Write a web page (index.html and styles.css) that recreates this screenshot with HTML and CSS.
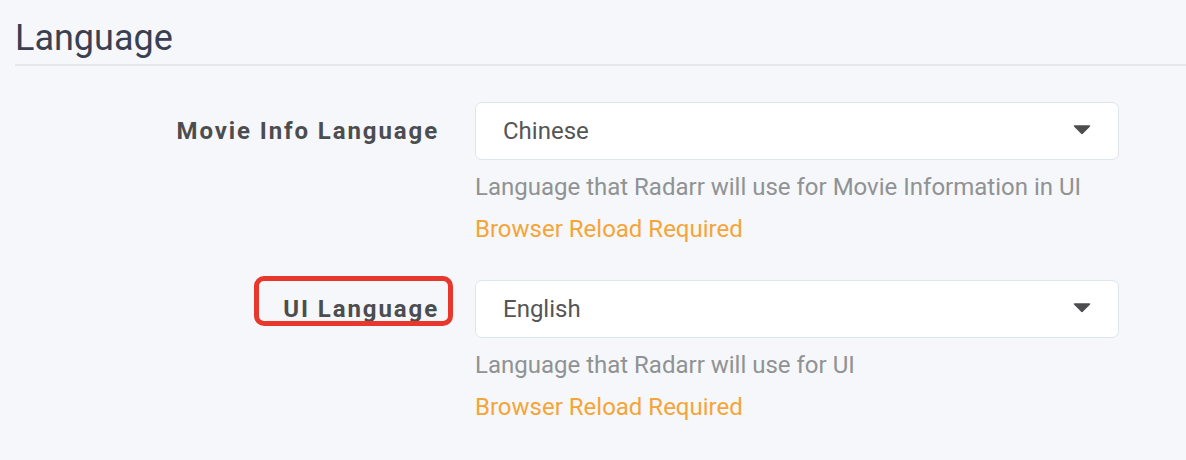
FILE: index.html
```html
<!DOCTYPE html>
<html lang="en">
<head>
<meta charset="utf-8">
<title>Language</title>
<link rel="stylesheet" href="styles.css">
</head>
<body>
<fieldset class="section">
  <div class="legend">Language</div>

  <div class="form-row">
    <label class="form-label">Movie Info Language</label>
    <div class="field">
      <div class="select">
        <span class="select-value">Chinese</span>
        <svg class="caret" width="18" height="11" viewBox="0 0 18 11"><path d="M2 1.2 H16 Q18.2 1.2 16.8 2.8 L10.1 9.6 Q9 10.7 7.9 9.6 L1.2 2.8 Q-0.2 1.2 2 1.2 Z" fill="#4d4d4f"/></svg>
      </div>
      <div class="help">Language that Radarr will use for Movie Information in UI</div>
      <div class="help warning">Browser Reload Required</div>
    </div>
  </div>

  <div class="form-row">
    <label class="form-label">UI Language<span class="highlight"></span></label>
    <div class="field">
      <div class="select">
        <span class="select-value">English</span>
        <svg class="caret" width="18" height="11" viewBox="0 0 18 11"><path d="M2 1.2 H16 Q18.2 1.2 16.8 2.8 L10.1 9.6 Q9 10.7 7.9 9.6 L1.2 2.8 Q-0.2 1.2 2 1.2 Z" fill="#4d4d4f"/></svg>
      </div>
      <div class="help">Language that Radarr will use for UI</div>
      <div class="help warning">Browser Reload Required</div>
    </div>
  </div>
</fieldset>
</body>
</html>
```

FILE: styles.css
```css
html, body {
  margin: 0;
  padding: 0;
  background: #f5f7fa;
  font-family: Roboto, "Liberation Sans", Arial, sans-serif;
}

.section {
  margin: 0;
  padding: 15px 0 0 15px;
  border: 0;
  min-width: 0;
}

.legend {
  font-size: 36px;
  line-height: 47px;
  color: #3a3f51;
  padding-bottom: 2px;
  border-bottom: 2px solid #e6e7ea;
  margin-bottom: 36px;
}

.form-row {
  display: flex;
  align-items: flex-start;
  margin-bottom: 30px;
}

.form-label {
  position: relative;
  width: 424px;
  flex: none;
  text-align: right;
  font-weight: bold;
  font-size: 24px;
  line-height: 58px;
  letter-spacing: 1.9px;
  color: #4c4d4f;
}

.highlight {
  position: absolute;
  left: 239px;
  top: -4px;
  width: 189px;
  height: 40px;
  border: 5px solid #e8372c;
  border-radius: 10px;
}

.field {
  margin-left: 36px;
  width: 644px;
}

.select {
  display: flex;
  align-items: center;
  justify-content: space-between;
  height: 58px;
  box-sizing: border-box;
  background: #fff;
  border: 1.5px solid #dde6e9;
  border-radius: 7px;
  padding: 0 27px 0 27px;
  margin-bottom: 6px;
}

.select-value {
  font-size: 24px;
  line-height: 56px;
  color: #555;
}

.caret {
  margin-bottom: 3px;
}

.help {
  font-size: 24px;
  line-height: 42px;
  color: #909293;
}

.warning {
  color: #f5a537;
}
```
